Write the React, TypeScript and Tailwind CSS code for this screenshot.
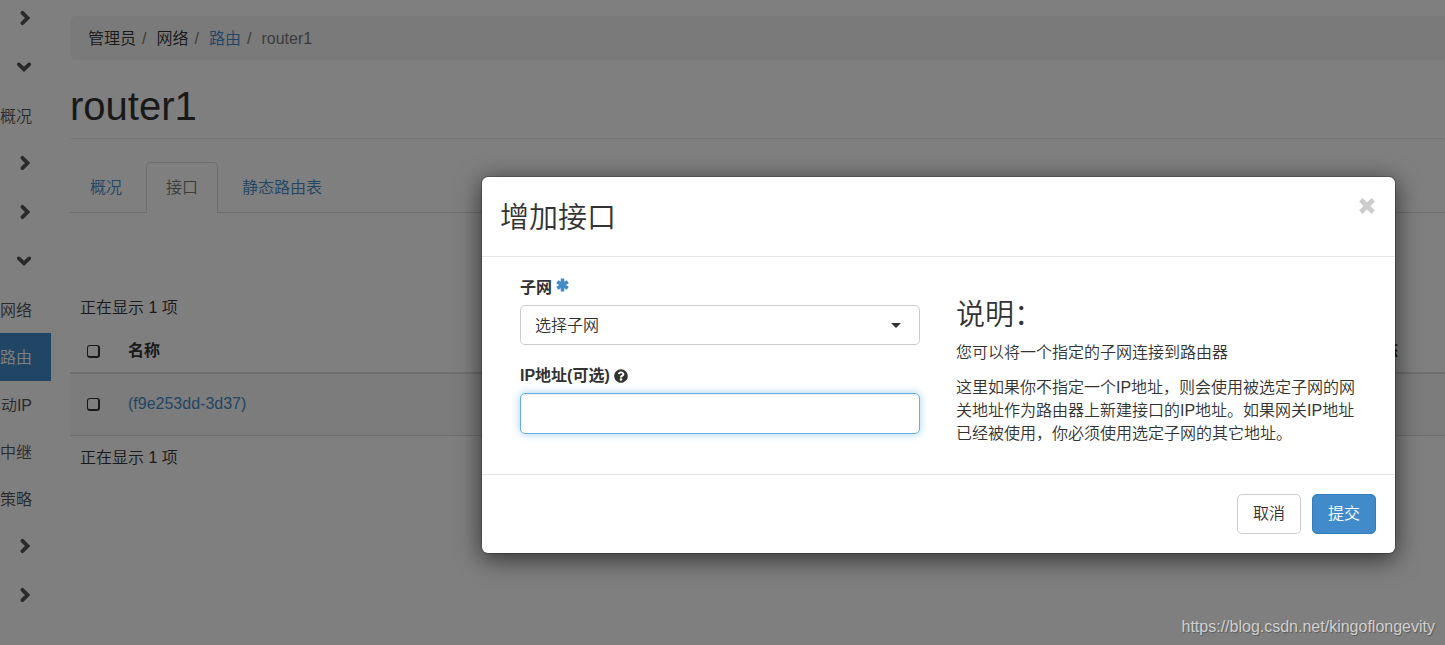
import React from "react";
import { FaQuestionCircle } from "react-icons/fa";

type Entry = { kind: "group"; open: boolean; label: string } | { kind: "link"; text: string; active?: boolean };

const entries: Entry[] = [
  { kind: "group", open: false, label: "项目" },
  { kind: "group", open: true, label: "管理员" },
  { kind: "link", text: "概况" },
  { kind: "group", open: false, label: "计算" },
  { kind: "group", open: false, label: "卷" },
  { kind: "group", open: true, label: "网络" },
  { kind: "link", text: "网络" },
  { kind: "link", text: "路由", active: true },
  { kind: "link", text: "浮动IP" },
  { kind: "link", text: "中继" },
  { kind: "link", text: "策略" },
  { kind: "group", open: false, label: "系统" },
  { kind: "group", open: false, label: "身份管理" },
];

function Chevron({ open }: { open: boolean }) {
  return (
    <svg viewBox="0 0 16 16" className="mb-0.5 size-4" fill="none" stroke="#555" strokeWidth="3.8" strokeLinecap="round" aria-hidden="true">
      {open ? <path d="M2.8 5.4 8 10.4l5.2-5" /> : <path d="M6.4 2.8 11.6 8l-5.2 5.2" />}
    </svg>
  );
}

function Asterisk() {
  return (
    <svg viewBox="0 0 13 14" className="mb-1.5 h-3.5 w-[13px]" fill="none" stroke="#428bca" strokeWidth="3.6" aria-hidden="true">
      <path d="M6.5.5v13M1.2 3.8l10.6 6.4M11.8 3.8 1.2 10.2" />
    </svg>
  );
}

function Sidebar() {
  return (
    <nav className="-mt-1.5 flex w-[51px] shrink-0 flex-col overflow-hidden">
      {entries.map((e, i) =>
        e.kind === "group" ? (
          <button key={i} type="button" aria-label={e.label} aria-expanded={e.open} className="flex h-[49px] items-center justify-end pr-[19px]">
            <Chevron open={e.open} />
          </button>
        ) : (
          <a
            key={i}
            href="#"
            className={
              e.active
                ? "flex h-12 items-center justify-end bg-[#428bca] pt-0.5 pr-[19px] whitespace-nowrap text-white"
                : "flex h-[47px] items-center justify-end pt-0.5 pr-[19px] whitespace-nowrap text-[#555]"
            }
          >
            {e.text}
          </a>
        )
      )}
    </nav>
  );
}

function Check({ label }: { label: string }) {
  return <input type="checkbox" aria-label={label} className="block size-[13px] appearance-none rounded-[3px] border border-r-2 border-b-2 border-[#333] bg-white" />;
}

function Page() {
  return (
    <main className="min-w-0 flex-1 pt-4 pl-[19px]">
      <nav className="flex h-11 items-center rounded-l-md bg-[#f5f5f5] px-[18px] pt-0.5">
        <span>管理员</span>
        <span className="px-1.5 text-[#777]">/</span>
        <span className="pl-1">网络</span>
        <span className="px-1.5 text-[#777]">/</span>
        <a href="#" className="pl-1 text-[#428bca]">路由</a>
        <span className="px-1.5 text-[#777]">/</span>
        <span className="pl-1 text-[#777]">router1</span>
      </nav>
      <h1 className="mt-6 border-b border-[#eee] pb-2.5 text-[40px] leading-[44px]">router1</h1>
      <div className="mt-[23px] flex h-[51px] border-b border-[#ddd]">
        <a href="#" className="flex items-center px-5 pt-0.5 text-[#428bca]">概况</a>
        <a href="#" className="-mb-px ml-1 flex items-center rounded-t-[5px] border border-b-0 border-[#ddd] bg-white px-[19px] text-[#777]">接口</a>
        <a href="#" className="ml-1 flex items-center px-5 pt-0.5 text-[#428bca]">静态路由表</a>
      </div>
      <table className="mt-[83px] w-full table-fixed text-left">
        <caption className="h-[34px] pl-2.5 text-left leading-6">正在显示 1 项</caption>
        <thead>
          <tr className="h-[43px] border-b-2 border-[#ddd]">
            <th className="w-12 pl-[17px]"><Check label="全选" /></th>
            <th className="w-[420px] pl-2.5 font-bold">名称</th>
            <th className="w-[860px] text-right font-bold">状态</th>
            <th />
          </tr>
        </thead>
        <tbody>
          <tr className="h-[62px] border-b border-[#ddd] bg-[#f9f9f9]">
            <td className="pl-[17px]"><Check label="选择 (f9e253dd-3d37)" /></td>
            <td className="pl-2.5"><a href="#" className="text-[#428bca]">(f9e253dd-3d37)</a></td>
            <td colSpan={2} />
          </tr>
        </tbody>
      </table>
      <p className="mt-2.5 pl-2.5 leading-6">正在显示 1 项</p>
    </main>
  );
}

function Dialog() {
  return (
    <section role="dialog" aria-modal="true" aria-labelledby="dialog-title" className="w-[915px] max-w-full rounded-[7px] border border-black/20 bg-white bg-clip-padding shadow-[0_5px_25px_rgba(0,0,0,0.6)]">
      <header className="flex h-20 items-start justify-between border-b border-[#e5e5e5] pt-5 pr-5 pl-[18px]">
        <h2 id="dialog-title" className="text-[29px] leading-[42px] font-[350]">增加接口</h2>
        <button type="button" aria-label="关闭" className="mt-px">
          <svg viewBox="0 0 16 16" className="size-4" fill="none" stroke="#ccc" strokeWidth="4.8" strokeLinejoin="round" aria-hidden="true">
            <path d="m1.8 1.8 12.4 12.4M14.2 1.8 1.8 14.2" />
          </svg>
        </button>
      </header>
      <div className="flex h-[217px] gap-9 px-[38px] pt-[18px]">
        <form className="w-[400px] shrink-0">
          <label htmlFor="subnet" className="flex h-6 items-center gap-1 pt-0.5 font-bold">
            子网 <Asterisk />
          </label>
          <div className="relative mt-1.5">
            <select id="subnet" className="block h-10 w-full appearance-none rounded-[5px] border border-[#ccc] bg-white px-3.5 pt-0.5">
              <option>选择子网</option>
            </select>
            <svg viewBox="0 0 10 5" className="pointer-events-none absolute top-[18px] right-[19px] h-[5px] w-2.5 fill-[#333]" aria-hidden="true">
              <path d="M0 0h10L5 5z" />
            </svg>
          </div>
          <label htmlFor="ip" className="mt-[18px] flex h-6 items-center gap-1 pt-0.5 font-bold">
            IP地址(可选) <FaQuestionCircle className="size-3.5" />
          </label>
          <input id="ip" type="text" className="mt-1.5 block h-[41px] w-full rounded-[5px] border border-[#66afe9] px-3.5 shadow-[inset_0_1px_1px_rgba(0,0,0,0.075),0_0_8px_rgba(102,175,233,0.6)] outline-none" />
        </form>
        <div className="min-w-0 flex-1 pt-5">
          <h3 className="text-[29px] leading-10 font-[350]">说明：</h3>
          <p className="mt-1.5 leading-[23px]">您可以将一个指定的子网连接到路由器</p>
          <p className="mt-3 leading-[23px]">这里如果你不指定一个IP地址，则会使用被选定子网的网关地址作为路由器上新建接口的IP地址。如果网关IP地址已经被使用，你必须使用选定子网的其它地址。</p>
        </div>
      </div>
      <footer className="flex h-[79px] items-start justify-end gap-[11px] border-t border-[#e5e5e5] px-[19px] pt-[19px]">
        <button type="button" className="h-10 rounded-[5px] border border-[#ccc] bg-white px-[15px]">取消</button>
        <button type="submit" className="h-10 rounded-[5px] border border-[#357ebd] bg-[#428bca] px-[15px] text-white">提交</button>
      </footer>
    </section>
  );
}

export default function App() {
  return (
    <div className="relative h-screen overflow-hidden bg-white font-['Liberation_Sans','Noto_Sans_CJK_SC',sans-serif] text-base font-[350] text-[#333]" lang="zh-CN">
      <div className="flex">
        <Sidebar />
        <Page />
      </div>
      <div className="absolute inset-0 flex items-start justify-end bg-black/50 pt-[176px] pr-[49px]">
        <Dialog />
      </div>
      <span className="absolute right-[10px] bottom-1.5 text-base leading-6 text-[#d0d0d0] [text-shadow:1px_1px_1px_rgba(0,0,0,0.3)]">https://blog.csdn.net/kingoflongevity</span>
    </div>
  );
}
